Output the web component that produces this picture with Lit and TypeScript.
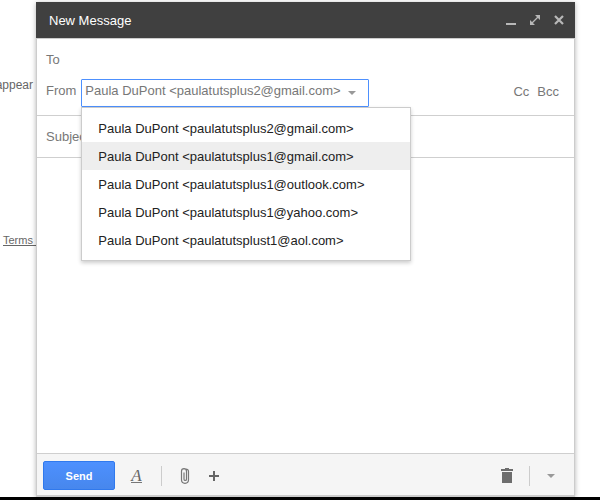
import { LitElement, html, css } from "lit";
import { customElement, state } from "lit/decorators.js";
import { classMap } from "lit/directives/class-map.js";

const ADDRESSES = [
  "paulatutsplus2@gmail.com",
  "paulatutsplus1@gmail.com",
  "paulatutsplus1@outlook.com",
  "paulatutsplus1@yahoo.com",
  "paulatutsplust1@aol.com",
];

const control = css`
  * {
    box-sizing: border-box;
  }
  button,
  input,
  textarea,
  select {
    font: inherit;
    color: inherit;
    margin: 0;
    padding: 0;
    border: 0;
    border-radius: 0;
    background: none;
    outline: none;
  }
  button {
    cursor: pointer;
  }
  svg {
    display: block;
  }
`;

@customElement("from-picker")
class FromPicker extends LitElement {
  static styles = [
    control,
    css`
      :host {
        display: flex;
        align-items: center;
        gap: 5px;
      }
      label {
        padding-bottom: 4px;
      }
      .field {
        position: relative;
        display: grid;
        grid-template-columns: auto 20px;
        align-items: center;
        height: 28px;
        border: 1px solid #4d90fe;
        border-radius: 1px;
      }
      .value {
        grid-area: 1 / 1 / 2 / 3;
        appearance: none;
        height: 26px;
        padding: 0 16px 4px 3px;
        color: #777;
      }
      .value option {
        color: #222;
      }
      .arrow {
        grid-area: 1 / 2 / 2 / 3;
        pointer-events: none;
      }
      .menu {
        position: absolute;
        top: calc(100% + 1px);
        left: -1px;
        z-index: 2;
        width: 330px;
        padding: 6px 0;
        border: 1px solid #ccc;
        background: #fff;
        box-shadow: 0 2px 4px rgba(0, 0, 0, 0.2);
      }
      .item {
        display: block;
        width: 100%;
        height: 28px;
        padding: 2px 16px 0;
        color: #222;
        text-align: left;
        white-space: nowrap;
      }
      .active {
        background: #eee;
      }
    `,
  ];

  @state() private chosen = 0;
  @state() private active = 1;

  render() {
    return html`
      <label for="from">From</label>
      <div class="field">
        <select
          id="from"
          class="value"
          @change=${(e: Event) => (this.chosen = (e.target as HTMLSelectElement).selectedIndex)}
        >
          ${ADDRESSES.map((a, i) => html`<option ?selected=${i === this.chosen}>Paula DuPont &lt;${a}&gt;</option>`)}
        </select>
        <svg class="arrow" width="8" height="4" viewBox="0 0 8 4"><path d="M0 0h8L4 4z" fill="#999" /></svg>
        <div class="menu" role="listbox" aria-label="From address">
          ${ADDRESSES.map(
            (a, i) => html`<button
              class=${classMap({ item: true, active: i === this.active })}
              role="option"
              aria-selected=${i === this.chosen}
              @mouseenter=${() => (this.active = i)}
              @click=${() => (this.chosen = i)}
            >Paula DuPont &lt;${a}&gt;</button>`
          )}
        </div>
      </div>
    `;
  }
}

@customElement("app-root")
class AppRoot extends LitElement {
  static styles = [
    control,
    css`
      :host {
        display: flex;
        flex-direction: column;
        height: 100vh;
        overflow: hidden;
        background: #fff;
        border-bottom: 3px solid #000;
        box-sizing: border-box;
        font: 13px/16px "Liberation Sans", Arial, sans-serif;
        color: #777;
      }
      .page {
        flex: 1;
        display: flex;
        min-height: 0;
        padding: 2px 25px 0 0;
      }
      .behind {
        flex: none;
        width: 36px;
        display: flex;
        flex-direction: column;
        align-items: flex-end;
        gap: 139px;
        padding-top: 75px;
        overflow: hidden;
        font-size: 12px;
        color: #666;
      }
      .note {
        padding-right: 3px;
      }
      .terms {
        font-size: 11px;
        white-space: pre;
        color: #666;
      }
      .compose {
        flex: 1;
        min-width: 0;
        display: flex;
        flex-direction: column;
        box-shadow: 0 1px 5px rgba(0, 0, 0, 0.3);
        background: #fff;
      }
      .title {
        flex: none;
        height: 36px;
        display: flex;
        align-items: center;
        gap: 14px;
        padding: 0 11px 0 13px;
        background: #404040;
        color: #fff;
      }
      .title h1 {
        flex: 1;
        margin: 0;
        padding-top: 2px;
        font: inherit;
      }
      .form {
        flex: 1;
        min-height: 0;
        display: flex;
        flex-direction: column;
        border: 1px solid #ccc;
        border-bottom-width: 2px;
      }
      .recipients {
        padding: 10px 15px 8px 9px;
        border-bottom: 1px solid #cfcfcf;
      }
      .to {
        display: flex;
        gap: 5px;
        height: 22px;
        line-height: 22px;
      }
      .to input {
        flex: 1;
      }
      .sender {
        display: flex;
        align-items: center;
        margin-top: 8px;
      }
      .sender from-picker {
        flex: 1;
      }
      .copies {
        display: flex;
        gap: 8px;
        padding-bottom: 2px;
      }
      .subject {
        flex: none;
        height: 42px;
        padding: 0 9px;
        border-bottom: 1px solid #cfcfcf;
      }
      .subject::placeholder {
        color: #777;
      }
      .message {
        flex: 1;
        resize: none;
        padding: 9px;
        color: #222;
      }
      .tools {
        flex: none;
        height: 42px;
        display: flex;
        align-items: center;
        padding: 2px 19px 0 6px;
        border-top: 1px solid #cfcfcf;
        background: #f5f5f5;
      }
      .send {
        width: 72px;
        height: 29px;
        margin-right: 16px;
        border: 1px solid #3079ed;
        border-radius: 2px;
        background: linear-gradient(#4d90fe, #4787ed);
        color: #fff;
        font-size: 11px;
        font-weight: bold;
      }
      .rule {
        width: 1px;
        height: 20px;
        background: #ccc;
      }
      .spacer {
        flex: 1;
      }
      .clip {
        margin: 0 17px 0 16px;
      }
      .format {
        width: 11px;
        height: 15px;
        margin-right: 19px;
        border-bottom: 1px solid #777;
        font: italic 17px/13px "Liberation Serif", "Times New Roman", serif;
        color: #666;
      }
      .trash {
        margin-right: 16px;
      }
      .more {
        margin-left: 17px;
      }
    `,
  ];

  render() {
    return html`
      <div class="page">
        <aside class="behind">
          <span class="note">appear</span>
          <a class="terms" href="#terms">Terms </a>
        </aside>
        <main class="compose">
          <header class="title">
            <h1>New Message</h1>
            <button aria-label="Minimize">
              <svg width="10" height="10" viewBox="0 0 10 10"><path d="M0 8h10v2H0z" fill="#b8b8b8" /></svg>
            </button>
            <button aria-label="Full screen">
              <svg width="10" height="10" viewBox="0 0 10 10" fill="#b8b8b8">
                <path d="M5 0h5v5zM0 5v5h5z" />
                <path d="M2 8L8 2" stroke="#b8b8b8" stroke-width="1.300" />
              </svg>
            </button>
            <button aria-label="Close">
              <svg width="10" height="10" viewBox="0 0 10 10"><path d="M1 1l8 8M9 1l-8 8" stroke="#b8b8b8" stroke-width="2.200" /></svg>
            </button>
          </header>
          <div class="form">
            <section class="recipients">
              <div class="to"><label for="to">To</label><input id="to" type="text" /></div>
              <div class="sender">
                <from-picker></from-picker>
                <div class="copies"><button>Cc</button><button>Bcc</button></div>
              </div>
            </section>
            <input class="subject" type="text" placeholder="Subject" aria-label="Subject" />
            <textarea class="message" aria-label="Message body"></textarea>
            <footer class="tools">
              <button class="send">Send</button>
              <button class="format" aria-label="Formatting options">A</button>
              <span class="rule"></span>
              <button class="clip" aria-label="Attach files">
                <svg width="14" height="16" viewBox="0 0 14 16" fill="none" stroke="#777" stroke-width="1.200">
                  <path d="M10.500 3.500v8.300a3.500 3.500 0 0 1-7 0V3.200a2.500 2.500 0 0 1 5 0v8a1.200 1.200 0 0 1-2.500 0V4.500M10.500 3.500a2.500 2.500 0 0 0-2.500-2.500H6" />
                </svg>
              </button>
              <button aria-label="Insert more">
                <svg width="10" height="10" viewBox="0 0 10 10"><path d="M4 0h2v4h4v2H6v4H4V6H0V4h4z" fill="#666" /></svg>
              </button>
              <span class="spacer"></span>
              <button class="trash" aria-label="Discard draft">
                <svg width="12" height="15" viewBox="0 0 12 15" fill="#6d6d6d"><path d="M4 0h4v1h4v2H0V1h4zM1 4h10v11H1z" /></svg>
              </button>
              <span class="rule"></span>
              <button class="more" aria-label="More options">
                <svg width="8" height="4" viewBox="0 0 8 4"><path d="M0 0h8L4 4z" fill="#999" /></svg>
              </button>
            </footer>
          </div>
        </main>
      </div>
    `;
  }
}
